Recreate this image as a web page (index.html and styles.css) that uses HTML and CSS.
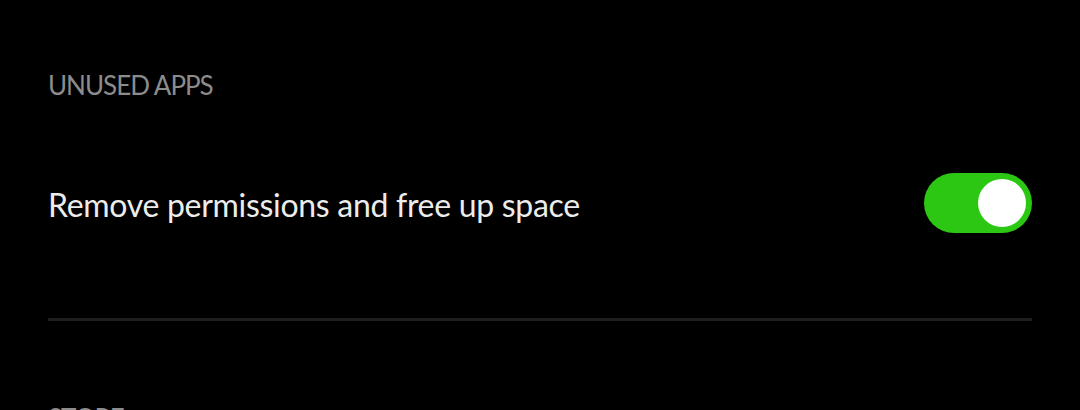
FILE: index.html
```html
<!DOCTYPE html>
<html lang="en">
<head>
  <meta charset="UTF-8" />
  <meta name="viewport" content="width=device-width, initial-scale=1.0" />
  <title>Unused apps</title>
  <link rel="stylesheet" href="styles.css">
</head>
<body>
  <section class="group">
    <div class="group-title">UNUSED APPS</div>
    <div class="row">
      <div class="row-label">Remove permissions and free up space</div>
      <button class="switch on" id="unused-switch" aria-label="Toggle"><span class="knob"></span></button>
    </div>
  </section>

  <div class="divider"></div>

  <section class="group">
    <div class="group-title">STORE</div>
  </section>

  <script>
    const sw = document.getElementById("unused-switch");
    sw.addEventListener("click", () => sw.classList.toggle("on"));
  </script>
</body>
</html>
```

FILE: styles.css
```css
:root {
  --bg: #000;
  --title: #8c8c8c;
  --text: #ececec;
  --green: #2cc712;
  --line: #1e1e1e;
}

body {
  margin: 0;
  padding: 0 48px;
  background-color: var(--bg);
  font-family: Lato, 'Noto Sans', sans-serif;
  height: 410px;
  overflow: hidden;
}

.group-title {
  color: var(--title);
  font-size: 26px;
  letter-spacing: -1px;
  line-height: 34px;
  padding-top: 68px;
}

.row {
  display: flex;
  justify-content: space-between;
  align-items: center;
  margin-top: 61px;
  height: 80px;
}

.row-label {
  color: var(--text);
  font-size: 32px;
  letter-spacing: -0.3px;
  padding-top: 3px;
}

.switch {
  width: 108px;
  height: 60px;
  border: none;
  border-radius: 30px;
  background-color: #333;
  padding: 6px;
  display: flex;
  cursor: pointer;
}

.switch.on {
  background-color: var(--green);
  justify-content: flex-end;
}

.knob {
  width: 48px;
  height: 48px;
  border-radius: 50%;
  background-color: #fff;
}

.divider {
  height: 3px;
  background-color: var(--line);
  margin-top: 75px;
}

.divider + .group .group-title {
  padding-top: 80px;
}
```
